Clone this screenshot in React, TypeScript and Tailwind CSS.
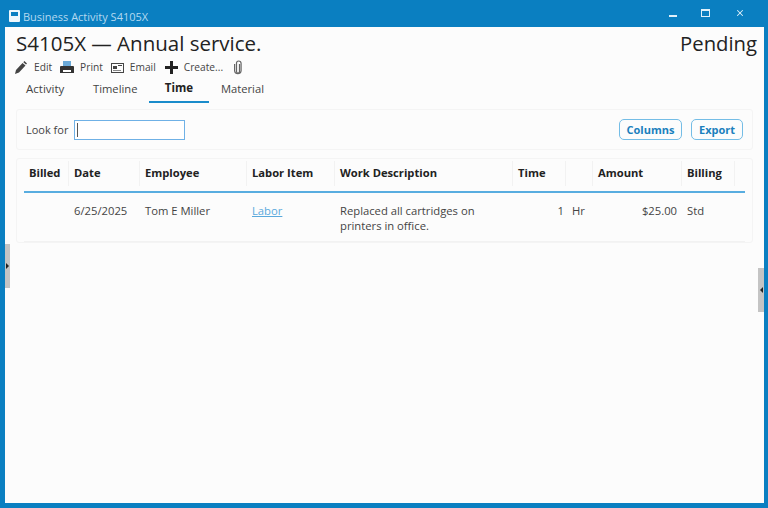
import { X } from "lucide-react";

const font = { fontFamily: '"Open Sans", "Noto Sans", sans-serif' };

const headers = ["Billed", "Date", "Employee", "Labor Item", "Work Description", "Time", "", "Amount", "Billing"];

const App = () => {
  return (
    <div style={font} className="relative w-[768px] h-[508px] overflow-hidden bg-[#0a7fc1] flex flex-col text-[#3a3a3a]">
      {/* title bar */}
      <div className="h-[27px] shrink-0 flex items-center pl-[9px] text-[#b4d9f0]">
        <svg className="w-[11px] h-[12px] mt-[4px]" viewBox="0 0 11 12">
          <path fill="#eef7fc" d="M1 0h9a1 1 0 0 1 1 1v10a1 1 0 0 1-1 1H1a1 1 0 0 1-1-1V1a1 1 0 0 1 1-1z" />
          <rect x="2" y="2" width="7" height="4" fill="#0a7fc1" />
        </svg>
        <span className="ml-[3px] text-[11px] leading-none mt-[5px]">Business Activity S4105X</span>
        <div className="ml-auto flex items-center mb-[1px]">
          <span className="w-[8px] h-[2px] bg-[#dff0fa] mt-[5px] mr-[24px]" />
          <span className="w-[9px] h-[8px] border border-[#dff0fa] border-t-2 mr-[25px]" />
          <X className="w-[10px] h-[10px] mr-[23px] text-[#dff0fa]" strokeWidth={2.5} />
        </div>
      </div>

      {/* window body */}
      <div className="flex-1 ml-[5px] mr-[4px] mb-[5px] bg-[#fcfcfc] flex flex-col min-h-0">
        <div className="flex justify-between items-start pl-[11px] pr-[7px] pt-[3px] h-[28px]">
          <span className="text-[20.5px] leading-[27px] text-[#222]">S4105X — Annual service.</span>
          <span className="text-[20.25px] leading-[27px] text-[#222]">Pending</span>
        </div>

        {/* toolbar */}
        <div className="flex items-center h-[21px] pl-[10px] mt-[2px] text-[10.2px] text-[#444]">
          <svg className="w-[12px] h-[13px]" viewBox="0 0 12 13">
            <path fill="#444" d="M0 13l1-4 6.5-7 3 2.6L4 11.5zM8.3 1.2L9.4 0l2.6 2.4-1 1.2z" />
          </svg>
          <span className="ml-[7px]">Edit</span>
          <svg className="w-[14px] h-[13px] ml-[8px]" viewBox="0 0 14 13">
            <rect x="3" y="0" width="8" height="5" fill="#6aa9d8" />
            <path fill="#333" d="M1 5h12a1 1 0 0 1 1 1v6H0V6a1 1 0 0 1 1-1z" />
            <rect x="3" y="9" width="8" height="2" fill="#fff" />
          </svg>
          <span className="ml-[6px]">Print</span>
          <svg className="w-[13px] h-[10px] ml-[8px]" viewBox="0 0 13 10">
            <rect x="0.5" y="0.5" width="12" height="9" fill="none" stroke="#444" />
            <rect x="2" y="3" width="4" height="3" fill="#444" />
            <rect x="7" y="2" width="4" height="1" fill="#444" />
            <rect x="2" y="7" width="8" height="1" fill="#888" />
          </svg>
          <span className="ml-[6px]">Email</span>
          <svg className="w-[13px] h-[13px] ml-[9px]" viewBox="0 0 13 13">
            <path fill="#222" d="M5 0h3v5h5v3H8v5H5V8H0V5h5z" />
          </svg>
          <span className="ml-[6px]">Create...</span>
          <svg className="w-[8px] h-[15px] ml-[11px]" viewBox="0 0 8 15" fill="none" stroke="#666" strokeWidth="1.2">
            <path d="M5.5 4v7.5a1.5 1.5 0 0 1-3 0V3a2 2 0 0 1 2-2h0a2.6 2.6 0 0 1 2.6 2.6V11a3.3 3.3 0 0 1-6.5 0V4" />
          </svg>
        </div>

        {/* tabs */}
        <div className="flex h-[25px] pl-[11px] text-[11.5px] text-[#444]">
          <span className="w-[60px] pl-[10px] pt-[2px]">Activity</span>
          <span className="w-[73px] pl-[17px] pt-[3px] text-[11.2px]">Timeline</span>
          <span className="w-[60px] text-center pt-[1px] font-bold text-[#222] border-b-[2px] border-[#1a8ccb]">Time</span>
          <span className="pl-[12px] pt-[3px] text-[11.2px]">Material</span>
        </div>

        <div className="px-[11px] pt-[6px] flex flex-col gap-[8px]">
          {/* search card */}
          <div className="h-[41px] border border-[#f4f4f4] rounded-[3px] flex items-center pl-[9px] pr-[9px]">
            <span className="text-[11px] text-[#444] mt-[1px]">Look for</span>
            <div className="ml-[6px] w-[111px] h-[20px] border border-[#6fb1e6] bg-white pl-[2px] py-[2px]">
              <div className="w-[1px] h-[14px] bg-[#555]" />
            </div>
            <button className="ml-auto h-[21px] w-[63px] border border-[#74bde6] rounded-[5px] text-[11px] font-bold text-[#1b80bd] pt-[1px]">Columns</button>
            <button className="ml-[9px] h-[21px] w-[52px] border border-[#74bde6] rounded-[5px] text-[11px] font-bold text-[#1b80bd] pt-[1px]">Export</button>
          </div>

          {/* table card */}
          <div className="h-[85px] border border-[#f4f4f4] rounded-[3px] px-[7px]">
            <div className="grid grid-cols-[45px_71px_107px_88px_178px_53px_27px_89px_53px] h-[34px] border-b-2 border-[#58ade0] items-start pt-[2px]">
              {headers.map((h, i) => (
                <div key={i} className="h-[25px] pl-[5px] flex items-center border-r border-[#f2f2f2] text-[11.2px] font-bold text-[#222] whitespace-nowrap">
                  {h}
                </div>
              ))}
            </div>
            <div className="grid grid-cols-[45px_71px_107px_88px_178px_53px_27px_89px_53px] h-[49px] border-b border-[#f2f2f2] pt-[10px] text-[11.25px] leading-[15px] text-[#444]">
              <div />
              <div className="pl-[5px]">6/25/2025</div>
              <div className="pl-[5px]">Tom E Miller</div>
              <div className="pl-[5px] text-[#5aa9dc] underline">Labor</div>
              <div className="pl-[5px]">Replaced all cartridges on<br />printers in office.</div>
              <div className="text-right pr-[2px]">1</div>
              <div className="pl-[6px]">Hr</div>
              <div className="text-right pr-[5px]">$25.00</div>
              <div className="pl-[5px]">Std</div>
            </div>
          </div>
        </div>
      </div>

      {/* splitter handles */}
      <div className="absolute left-[5px] top-[244px] w-[5px] h-[44px] bg-[#c4c4c4] flex items-center justify-center">
        <span className="border-y-[3px] border-y-transparent border-l-[3px] border-l-[#222]" />
      </div>
      <div className="absolute right-[4px] top-[268px] w-[6px] h-[44px] bg-[#c4c4c4] flex items-center justify-center">
        <span className="border-y-[3px] border-y-transparent border-r-[3px] border-r-[#222]" />
      </div>
    </div>
  );
};

export default App;
